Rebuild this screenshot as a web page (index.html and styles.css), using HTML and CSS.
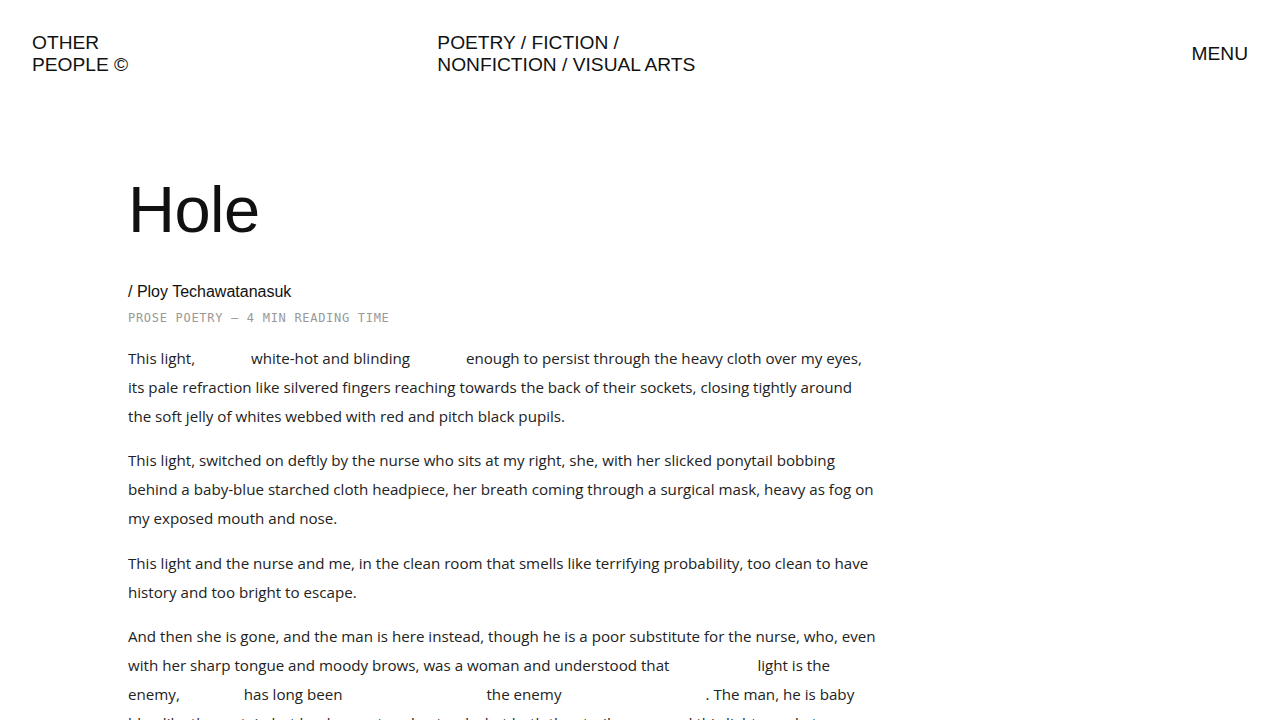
FILE: index.html
```html
<!DOCTYPE html>
<html lang="en">
<head>
<meta charset="utf-8">
<title>Hole — Other People</title>
<link rel="stylesheet" href="styles.css">
</head>
<body>
<header class="site-header">
  <a class="brand" href="#">OTHER<br>PEOPLE ©</a>
  <nav class="sections">
    <a href="#">POETRY</a> / <a href="#">FICTION</a> /<br>
    <a href="#">NONFICTION</a> / <a href="#">VISUAL ARTS</a>
  </nav>
  <button class="menu">MENU</button>
</header>
<main class="article">
  <h1 class="title">Hole</h1>
  <p class="byline">/ Ploy Techawatanasuk</p>
  <p class="meta">PROSE POETRY — 4 MIN READING TIME</p>
  <div class="body">
    <p>This light, <span class="blank b56"></span>white-hot and blinding <span class="blank b56"></span>enough to persist through the heavy cloth over my eyes, its pale refraction like silvered fingers reaching towards the back of their sockets, closing tightly around the soft jelly of whites webbed with red and pitch black pupils.</p>
    <p>This light, switched on deftly by the nurse who sits at my right, she, with her slicked ponytail bobbing behind a baby-blue starched cloth headpiece, her breath coming through a surgical mask, heavy as fog on my exposed mouth and nose.</p>
    <p>This light and the nurse and me, in the clean room that smells like terrifying probability, too clean to have history and too bright to escape.</p>
    <p>And then she is gone, and the man is here instead, though he is a poor substitute for the nurse, who, even with her sharp tongue and moody brows, was a woman and understood that <span class="blank b84"></span>light is the enemy, <span class="blank b60"></span>has long been <span class="blank b140"></span>the enemy<span class="blank b144"></span>. The man, he is baby blue like the curtain but he does not understand what both the sterile room and this light can do to me, still.</p>
  </div>
</main>
</body>
</html>
```
FILE: styles.css
```css
* { box-sizing: border-box; }
html, body { margin: 0; padding: 0; background: #fff; }
body {
  color: #111;
  font-family: "Liberation Sans", Arial, sans-serif;
}
a { color: inherit; text-decoration: none; }

.site-header {
  display: grid;
  grid-template-columns: 1fr 1fr 1fr;
  align-items: center;
  padding: 32px 32px 0;
  font-size: 19.2px;
  line-height: 22px;
}
.brand { justify-self: start; }
.sections { justify-self: start; }
.menu {
  justify-self: end;
  border: 0;
  background: none;
  padding: 0;
  font: inherit;
  color: inherit;
  cursor: pointer;
}

.article {
  padding: 101px 128px 0;
}
.title {
  margin: 0;
  font-size: 65px;
  font-weight: 400;
  line-height: 1;
  letter-spacing: -0.5px;
  color: #111;
}
.byline {
  margin: 40px 0 0;
  font-size: 16px;
  line-height: 20px;
}
.meta {
  margin: 8px 0 0;
  font-family: "DejaVu Sans Mono", "Liberation Mono", monospace;
  font-size: 12px;
  line-height: 16px;
  color: #999;
  letter-spacing: 0.7px;
}
.body {
  margin-top: 18px;
  max-width: 749px;
  font-family: "Open Sans", "Noto Sans", sans-serif;
  font-size: 15.15px;
  line-height: 28.8px;
  color: #222;
}
.body p { margin: 0 0 16px; }
.blank { display: inline-block; height: 1px; }
.b56 { width: 52px; }
.b60 { width: 60px; }
.b84 { width: 84px; }
.b140 { width: 140px; }
.b144 { width: 144px; }
```
